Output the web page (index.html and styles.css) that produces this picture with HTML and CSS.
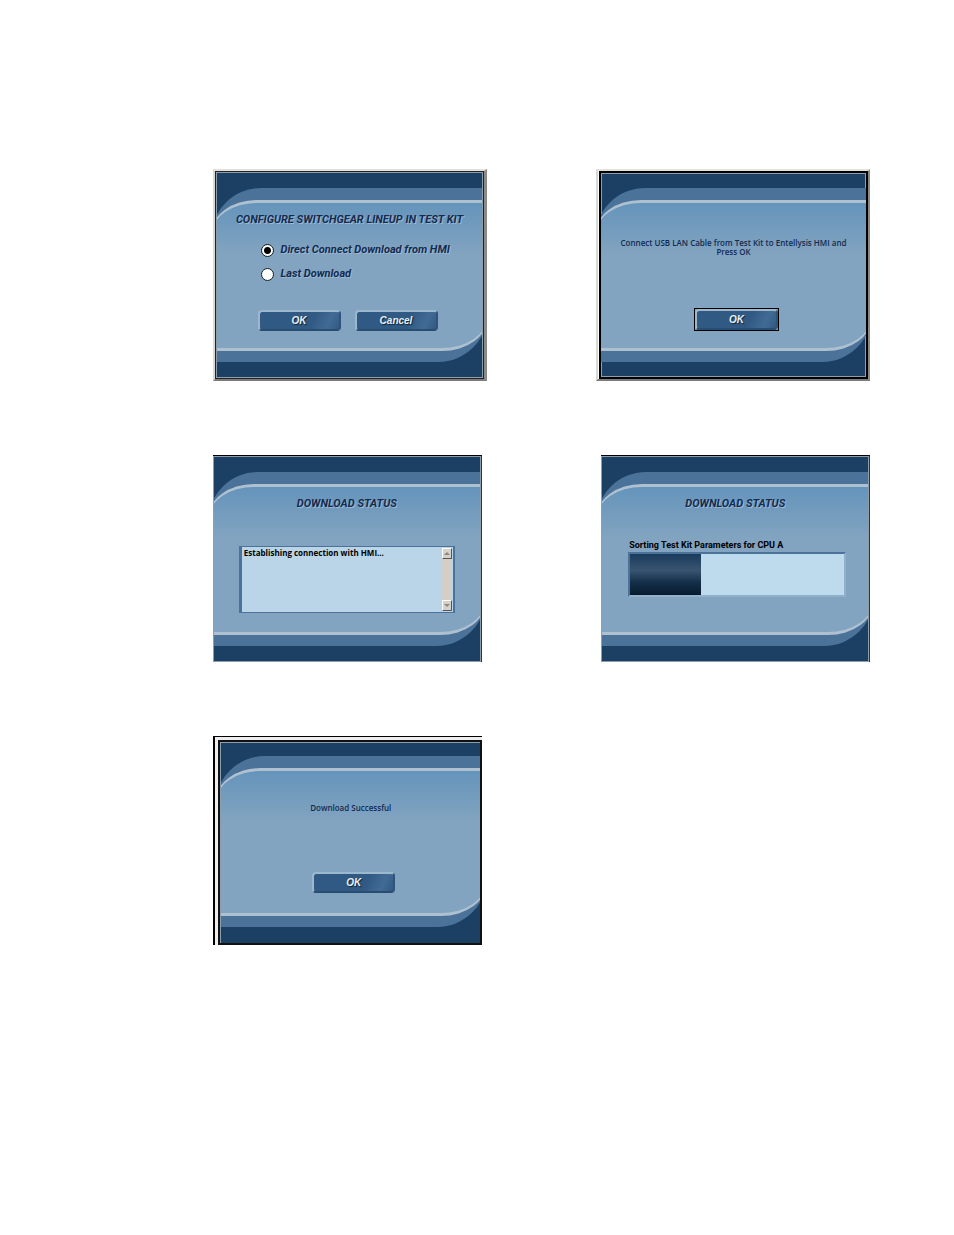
FILE: index.html
```html
<!DOCTYPE html>
<html lang="en">
<head>
<meta charset="utf-8">
<meta name="viewport" content="width=device-width, initial-scale=1">
<title>Test Kit Configuration</title>
<link rel="stylesheet" href="styles.css">
</head>
<body>
<main class="page">

  <form class="dialog dialog-raised">
    <div class="window"><div class="band"><div class="panel">
      <h2 class="title">CONFIGURE SWITCHGEAR LINEUP IN TEST KIT</h2>
      <div class="choices">
        <label class="choice"><input class="radio" type="radio" name="source" checked>Direct Connect Download from HMI</label>
        <label class="choice"><input class="radio" type="radio" name="source">Last Download</label>
      </div>
      <div class="actions actions-pair">
        <button class="button" type="button">OK</button>
        <button class="button" type="button">Cancel</button>
      </div>
    </div></div></div>
  </form>

  <section class="dialog dialog-focus">
    <div class="window"><div class="band"><div class="panel">
      <p class="message">Connect USB LAN Cable from Test Kit to Entellysis HMI and<br>Press OK</p>
      <div class="actions actions-single">
        <span class="default-ring"><button class="button" type="button">OK</button></span>
      </div>
    </div></div></div>
  </section>

  <section class="dialog dialog-flat">
    <div class="window"><div class="band"><div class="panel">
      <h2 class="title">DOWNLOAD STATUS</h2>
      <div class="log">
        <textarea class="log-text" aria-label="Download log" readonly>Establishing connection with HMI...</textarea>
        <div class="scrollbar">
          <button class="arrow" type="button" aria-label="Scroll up"><svg viewBox="0 0 6 3" width="6" height="3"><path d="M0 3 3 0 6 3z" fill="#8d8981"/></svg></button>
          <button class="arrow" type="button" aria-label="Scroll down"><svg viewBox="0 0 6 3" width="6" height="3"><path d="M0 0h6L3 3z" fill="#8d8981"/></svg></button>
        </div>
      </div>
    </div></div></div>
  </section>

  <section class="dialog dialog-flat dialog-end">
    <div class="window"><div class="band"><div class="panel">
      <h2 class="title">DOWNLOAD STATUS</h2>
      <div class="task">
        <label class="task-name" for="sorting">Sorting Test Kit Parameters for CPU A</label>
        <progress class="progress" id="sorting" value="33" max="100"></progress>
      </div>
    </div></div></div>
  </section>

  <section class="dialog dialog-nested">
    <div class="window"><div class="band"><div class="panel">
      <p class="message">Download Successful</p>
      <div class="actions actions-single">
        <button class="button" type="button">OK</button>
      </div>
    </div></div></div>
  </section>

</main>
</body>
</html>
```
FILE: styles.css
```css
* { box-sizing: border-box; }

body {
  margin: 0;
  background: #fff;
  color: #142b50;
  font-family: "Liberation Sans", Arial, sans-serif;
}

.page {
  display: grid;
  grid-template-columns: repeat(2, minmax(0, 1fr));
  align-items: start;
  gap: 74px 109px;
  padding: 169px 84px 80px 213px;
}

.dialog {
  display: flex;
  min-height: 207px;
}

.dialog-raised,
.dialog-focus {
  min-height: 212px;
  border: 2px solid;
  border-color: #e4e2dd #8c8a88 #7c7c7c #d8d8d4;
}

.dialog-raised { border-right-width: 3px; }

.dialog-focus { padding-left: 1px; }

.dialog-flat {
  width: 98%;
  border-top: 1px solid #000;
  border-right: 1px solid #333;
}

.dialog-end { justify-self: end; }

.dialog-nested {
  width: 98%;
  min-height: 209px;
  padding: 3px 0 0 3px;
  background: #eee;
  border: solid #000;
  border-width: 1px 0 0 2px;
}

.window {
  display: flex;
  flex: 1;
  min-width: 0;
  overflow: hidden;
  padding: 15px 0;
  background: #1b4063;
  border: 1px solid #8c9dab;
}

.dialog-raised .window {
  border-width: 2px;
  outline: 1px solid #222;
  outline-offset: -1px;
}

.dialog-focus .window {
  border: 2px solid #000;
  box-shadow: inset 0 0 0 1px #8c9dab;
}

.dialog-nested .window {
  padding: 13px 0 16px;
  border-width: 3px 1px 2px 3px;
  outline: 2px solid #111;
  outline-offset: -2px;
}

/* The rounded corners start outside the window and are clipped by it. */
.band {
  display: flex;
  flex: 1;
  min-width: 0;
  margin: 0 -6px;
  padding: 12px 0 11px;
  background: #4b739a;
  border-radius: 50px 0 / 50px 0;
}

.panel {
  display: flex;
  flex: 1;
  flex-direction: column;
  align-items: center;
  min-width: 0;
  padding: 8px 6px 17px;
  background: linear-gradient(#6594bb, #82a4c0 36%, #82a4c0);
  border: solid #afc1d1;
  border-width: 3px 1px;
  border-radius: 46px 0 / 34px 0;
}

.dialog-nested .panel { padding-bottom: 20px; }

.title {
  margin: 0;
  font: italic bold 11px/18px Roboto, "Liberation Sans", sans-serif;
  white-space: nowrap;
  text-shadow: 1px 1px 0 #9bb9d3;
}

.choices {
  display: flex;
  flex-direction: column;
  gap: 6px;
  width: 184px;
  margin: 12px 0 0 6px;
}

.choice {
  display: flex;
  align-items: center;
  gap: 7px;
  font: italic bold 11px/18px Roboto, "Liberation Sans", sans-serif;
  white-space: nowrap;
  text-shadow: 1px 1px 0 #9bb9d3;
}

.radio {
  appearance: none;
  flex: none;
  width: 13px;
  height: 13px;
  margin: 0;
  background: #fff;
  border: 1px solid #122;
  border-radius: 50%;
}

.radio:checked { background: radial-gradient(circle, #000 3px, #fff 4px); }

.actions {
  display: flex;
  justify-content: center;
  gap: 14px;
  margin-top: auto;
}

.actions-pair { margin-right: 4px; }
.actions-single { margin-left: 6px; }

.button {
  width: 83px;
  height: 21px;
  padding: 0;
  background: linear-gradient(115deg, #305a84 65%, #426b94 85%, #305a84);
  border: 2px solid;
  border-color: #9db8cd #315476 #294d70 #9db8cd;
  border-radius: 4px;
  color: #e8f0f6;
  font: italic bold 10px/16px "Liberation Sans", Arial, sans-serif;
  text-shadow: 1px 1px 1px #123;
}

.default-ring {
  display: flex;
  border: 1px solid #000;
}

.message {
  margin: 27px 0 0;
  font: 600 8px/9px "Open Sans", sans-serif;
  text-align: center;
  white-space: nowrap;
}

.dialog-nested .message { margin-top: 24px; }

.log {
  display: flex;
  width: 216px;
  height: 67px;
  margin-top: 33px;
  padding: 1px 1px 1px 2px;
  background: #bad5e8;
  border: solid #4b739a;
  border-width: 1px 2px 1px 3px;
}

.log-text {
  flex: 1;
  min-width: 0;
  padding: 0;
  background: none;
  border: 0;
  color: #000;
  font: 700 8px/9px "Open Sans", sans-serif;
  overflow: hidden;
  resize: none;
}

.scrollbar {
  display: flex;
  flex-direction: column;
  justify-content: space-between;
  width: 10px;
  background: #d3cec8;
}

.arrow {
  display: grid;
  place-items: center;
  height: 11px;
  padding: 0;
  background: #d6d2ca;
  border: 1px solid;
  border-color: #fff #555 #555 #fff;
}

.task {
  display: flex;
  flex-direction: column;
  width: 218px;
  margin: 25px 0 0 4px;
}

.task-name {
  padding-left: 1px;
  color: #000;
  font: bold 9px/14px Roboto, "Liberation Sans", sans-serif;
  white-space: nowrap;
}

.progress {
  appearance: none;
  width: 100%;
  height: 45px;
  border: 2px solid;
  border-color: #4b739a #91b0ca #91b0ca #4b739a;
}

.progress::-webkit-progress-bar { background: #bedaed; }
.progress::-webkit-progress-value { background: linear-gradient(#1a3c5d, #395470 40%, #14304a 68%, #081b2e); }
```
